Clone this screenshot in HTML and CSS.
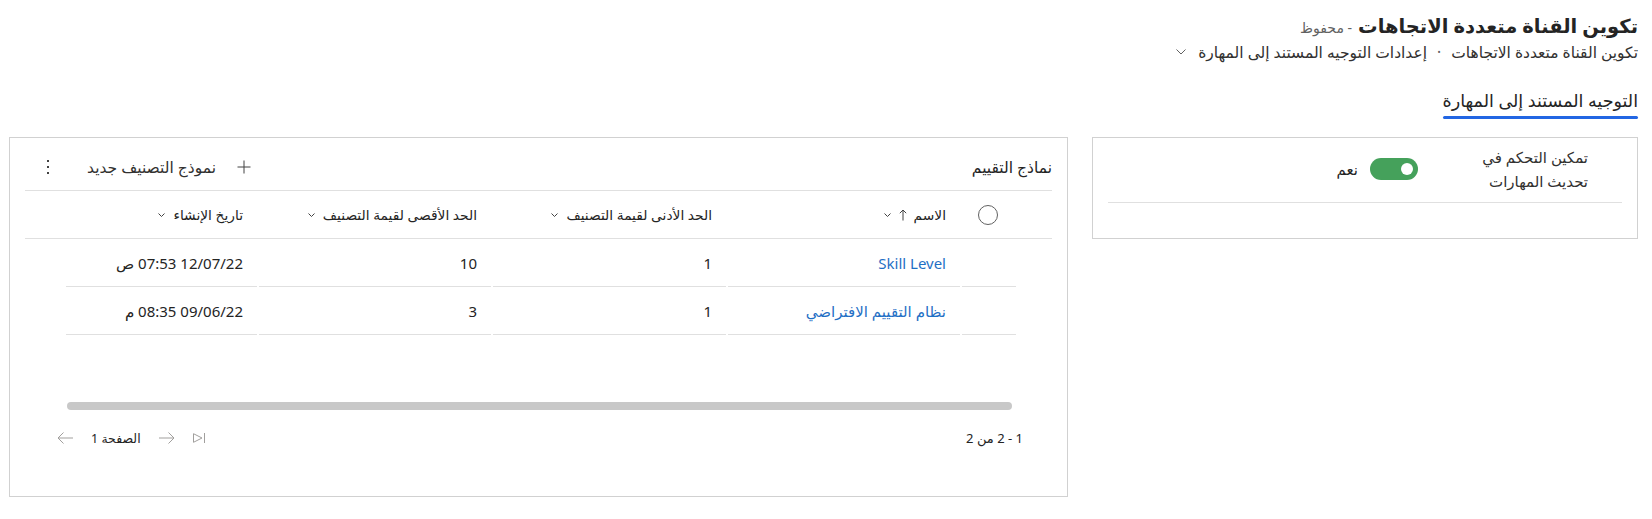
FILE: index.html
```html
<!DOCTYPE html>
<html lang="ar" dir="rtl">
<head>
<meta charset="utf-8">
<title>تكوين القناة متعددة الاتجاهات</title>
<link rel="stylesheet" href="styles.css">
</head>
<body>
<div class="page">
  <header class="form-header">
    <h1 class="title"><span class="title-text">تكوين القناة متعددة الاتجاهات</span><span class="status">- محفوظ</span></h1>
    <div class="breadcrumb">
      <span>تكوين القناة متعددة الاتجاهات</span>
      <span class="sep">·</span>
      <span>إعدادات التوجيه المستند إلى المهارة</span>
      <svg class="crumb-chevron" width="10" height="6" viewBox="0 0 10 6"><path d="M0.5 0.5L5 5L9.5 0.5" fill="none" stroke="#616161"/></svg>
    </div>
  </header>

  <nav class="tabs">
    <div class="tab is-active">التوجيه المستند إلى المهارة</div>
  </nav>

  <main class="sections">
    <section class="card settings">
      <div class="field">
        <div class="field-label">تمكين التحكم في تحديث المهارات</div>
        <div class="field-control">
          <span class="toggle is-on"><span class="knob"></span></span>
          <span class="toggle-text">نعم</span>
        </div>
      </div>
    </section>

    <section class="card grid-card">
      <div class="grid-toolbar">
        <h2 class="grid-title">نماذج التقييم</h2>
        <div class="commands">
          <button class="cmd" type="button">
            <svg width="14" height="14" viewBox="0 0 14 14"><path d="M7 0.5V13.5M0.5 7H13.5" stroke="#424242" stroke-width="1" fill="none"/></svg>
            <span>نموذج التصنيف جديد</span>
          </button>
          <button class="more" type="button">
            <svg width="4" height="16" viewBox="0 0 4 16"><rect x="1" y="1" width="2" height="2" fill="#424242"/><rect x="1" y="7" width="2" height="2" fill="#424242"/><rect x="1" y="13" width="2" height="2" fill="#424242"/></svg>
          </button>
        </div>
      </div>

      <div class="grid-head">
        <div class="cols">
          <div class="cell select">
            <svg width="20" height="20" viewBox="0 0 20 20"><circle cx="10" cy="10" r="9.5" fill="none" stroke="#616161"/></svg>
          </div>
          <div class="cell hcell">
            <span>الاسم</span>
            <svg class="sort" width="8" height="12" viewBox="0 0 8 12"><path d="M4 11.5V1M0.8 4.2L4 1L7.2 4.2" fill="none" stroke="#424242"/></svg>
            <svg class="chev" width="7" height="4" viewBox="0 0 7 4"><path d="M0.5 0.5L3.5 3.5L6.5 0.5" fill="none" stroke="#424242"/></svg>
          </div>
          <div class="cell hcell">
            <span>الحد الأدنى لقيمة التصنيف</span>
            <svg class="chev" width="7" height="4" viewBox="0 0 7 4"><path d="M0.5 0.5L3.5 3.5L6.5 0.5" fill="none" stroke="#424242"/></svg>
          </div>
          <div class="cell hcell">
            <span>الحد الأقصى لقيمة التصنيف</span>
            <svg class="chev" width="7" height="4" viewBox="0 0 7 4"><path d="M0.5 0.5L3.5 3.5L6.5 0.5" fill="none" stroke="#424242"/></svg>
          </div>
          <div class="cell hcell">
            <span>تاريخ الإنشاء</span>
            <svg class="chev" width="7" height="4" viewBox="0 0 7 4"><path d="M0.5 0.5L3.5 3.5L6.5 0.5" fill="none" stroke="#424242"/></svg>
          </div>
        </div>
      </div>

      <div class="grid-body">
        <div class="cols row">
          <div class="cell select"></div>
          <div class="cell"><a class="link" href="#">Skill Level</a></div>
          <div class="cell">1</div>
          <div class="cell">10</div>
          <div class="cell">12/07/22 07:53 ص</div>
        </div>
        <div class="cols row">
          <div class="cell select"></div>
          <div class="cell"><a class="link" href="#">نظام التقييم الافتراضي</a></div>
          <div class="cell">1</div>
          <div class="cell">3</div>
          <div class="cell">09/06/22 08:35 م</div>
        </div>
      </div>

      <div class="hscroll"><div class="thumb"></div></div>

      <div class="grid-footer">
        <span class="count">1 - 2 من 2</span>
        <div class="pager">
          <svg width="12" height="10" viewBox="0 0 12 10"><path d="M0.5 0.7L9 5L0.5 9.3Z" fill="none" stroke="#a19f9d"/><path d="M11.5 0V10" stroke="#a19f9d"/></svg>
          <svg width="16" height="12" viewBox="0 0 16 12"><path d="M0 6H15M9.5 0.5L15 6L9.5 11.5" fill="none" stroke="#a19f9d"/></svg>
          <span class="page-label">الصفحة 1</span>
          <svg width="16" height="12" viewBox="0 0 16 12"><path d="M16 6H1M6.5 0.5L1 6L6.5 11.5" fill="none" stroke="#a19f9d"/></svg>
        </div>
      </div>
    </section>
  </main>
</div>
</body>
</html>
```
FILE: styles.css
```css
* { box-sizing: border-box; }

html, body {
  margin: 0;
  background: #ffffff;
}

body {
  font-family: "Noto Sans", "DejaVu Sans", sans-serif;
  font-size: 14px;
  color: #242424;
}

.page {
  padding: 12px 14px 0 9px;
}

/* header */
.title {
  margin: 0;
  display: flex;
  align-items: baseline;
  gap: 6px;
  line-height: 28px;
}
.title-text {
  font-size: 19.5px;
  font-weight: 700;
  color: #242424;
}
.status {
  font-size: 14px;
  font-weight: 400;
  color: #616161;
}

.breadcrumb {
  display: flex;
  align-items: center;
  gap: 10px;
  font-size: 15.5px;
  line-height: 20px;
  color: #323130;
}
.breadcrumb .sep { color: #616161; }
.crumb-chevron { margin-right: 2px; }

/* tabs */
.tabs {
  display: flex;
  margin-top: 27px;
}
.tab {
  position: relative;
  font-size: 17.5px;
  line-height: 22px;
  padding-bottom: 8px;
  color: #242424;
}
.tab.is-active::after {
  content: "";
  position: absolute;
  left: 0;
  right: 0;
  bottom: 0;
  height: 3px;
  border-radius: 2px;
  background: #2266e3;
}

/* sections */
.sections {
  display: flex;
  align-items: flex-start;
  gap: 24px;
  margin-top: 18px;
}
.card {
  border: 1px solid #d1d1d1;
  background: #ffffff;
}

/* settings card */
.settings {
  flex: 0 0 546px;
  height: 102px;
  padding: 7px 15px 0;
}
.field {
  display: flex;
  align-items: center;
  padding: 0 34px 9px 0;
  border-bottom: 1px solid #e0e0e0;
}
.field-label {
  width: 132px;
  font-size: 15px;
  line-height: 24px;
  color: #323130;
}
.field-control {
  display: flex;
  align-items: center;
  gap: 12px;
  margin-right: 38px;
}
.toggle {
  position: relative;
  display: block;
  width: 48px;
  height: 22px;
  border-radius: 11px;
  background: #45a15b;
}
.toggle .knob {
  position: absolute;
  top: 5px;
  right: 5px;
  width: 12px;
  height: 12px;
  border-radius: 50%;
  background: #ffffff;
}
.toggle-text {
  font-size: 15px;
  color: #242424;
}

/* grid card */
.grid-card {
  flex: 1 1 auto;
  padding: 0 15px 30px;
}
.grid-toolbar {
  display: flex;
  align-items: center;
  justify-content: space-between;
  height: 53px;
  padding-top: 5px;
  border-bottom: 1px solid #e0e0e0;
}
.grid-title {
  margin: 0;
  font-size: 15.5px;
  font-weight: 400;
  color: #242424;
}
.commands {
  display: flex;
  align-items: center;
}
.cmd, .more {
  font: inherit;
  color: #323130;
  background: none;
  border: 0;
  padding: 0;
  display: flex;
  align-items: center;
  cursor: pointer;
}
.cmd { gap: 21px; font-size: 15.5px; }
.more {
  width: 46px;
  justify-content: center;
  margin-right: 16px;
}

.cols {
  display: grid;
  grid-template-columns: 56px 234px 235px 234px 193px;
  margin: 0 36px 0 39px;
}
.grid-head {
  height: 48px;
  border-bottom: 1px solid #e0e0e0;
}
.grid-head .cols { height: 47px; }
.cell {
  display: flex;
  align-items: center;
  padding: 0 14px;
  min-width: 0;
  white-space: nowrap;
}
.select {
  justify-content: center;
  padding: 0;
}
.hcell {
  gap: 6px;
  font-size: 13.8px;
  color: #242424;
}
.hcell .sort { margin-right: 1px; }
.hcell .chev { margin-right: 2px; }

.grid-body {
  height: 163px;
}
.row .cell {
  height: 48px;
  font-size: 15px;
  color: #242424;
  border-bottom: 1px solid #e0e0e0;
  margin-left: 2px;
}
.link {
  color: #1f6fc5;
  text-decoration: none;
}

.hscroll {
  margin: 0 40px 0 42px;
  height: 8px;
}
.thumb {
  height: 8px;
  border-radius: 4px;
  background: #c8c8c8;
}

.grid-footer {
  display: flex;
  align-items: center;
  justify-content: space-between;
  height: 56px;
  padding: 0 29px 0 32px;
}
.count {
  font-size: 13px;
  color: #242424;
}
.pager {
  display: flex;
  align-items: center;
  gap: 18px;
}
.page-label {
  font-size: 12.5px;
  color: #242424;
}
```
